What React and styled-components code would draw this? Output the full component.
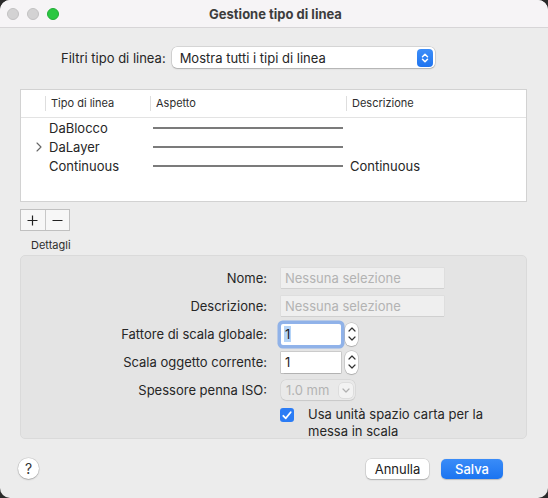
import styled, { createGlobalStyle } from 'styled-components';

const GlobalStyle = createGlobalStyle`
  html, body {
    margin: 0;
    padding: 0;
    background: #2a2a2a;
  }
  body {
    font-family: 'Inter', 'Liberation Sans', sans-serif;
    -webkit-font-smoothing: antialiased;
  }
`;

const Window = styled.div`
  width: 548px;
  height: 498px;
  background: #ececec;
  border-radius: 10px;
  overflow: hidden;
  display: flex;
  flex-direction: column;
  font-size: 13px;
  color: #262626;
`;

const TitleBar = styled.div`
  height: 28px;
  flex: none;
  box-sizing: border-box;
  background: #f6f4f6;
  border-bottom: 1px solid #d7d5d7;
  display: grid;
  grid-template-columns: 1fr auto 1fr;
  align-items: center;
  padding-left: 7px;
`;

const Lights = styled.div`
  display: flex;
  gap: 8px;
`;

const Light = styled.span`
  width: 12px;
  height: 12px;
  border-radius: 50%;
  box-sizing: border-box;
  background: ${p => (p.green ? '#2ac741' : '#d3d2d3')};
  border: 0.5px solid ${p => (p.green ? '#22ac36' : '#c2c1c2')};
`;

const Title = styled.div`
  font-weight: 700;
  color: #3d3d3d;
  font-size: 13px;
  margin-left: -4px;
`;

const Body = styled.div`
  padding: 0 21px 0 20px;
  display: flex;
  flex-direction: column;
`;

const FilterRow = styled.div`
  display: flex;
  align-items: center;
  gap: 6px;
  margin-top: 19px;
  padding-left: 41px;
`;

const Popup = styled.div`
  width: 263px;
  height: 21px;
  box-sizing: border-box;
  background: #fff;
  border-radius: 5px;
  box-shadow: 0 0 0 0.5px rgba(0, 0, 0, 0.18), 0 1px 1.5px rgba(0, 0, 0, 0.18);
  display: flex;
  align-items: center;
  justify-content: space-between;
  padding: 0 2px 0 8px;
`;

const BlueArrows = styled.span`
  width: 16px;
  height: 18px;
  border-radius: 4px;
  background: linear-gradient(#3d8ef8, #1f74ef);
  display: flex;
  align-items: center;
  justify-content: center;
`;

const Table = styled.div`
  margin-top: 21px;
  height: 113px;
  box-sizing: border-box;
  background: #fff;
  border: 1px solid #d2d2d2;
`;

const Columns = styled.div`
  display: grid;
  grid-template-columns: 24px 105px 196px 1fr;
  align-items: center;
`;

const Header = styled(Columns)`
  height: 27px;
  border-bottom: 1px solid #e3e3e3;
`;

const HeadCell = styled.div`
  height: 15px;
  line-height: 15px;
  font-size: 11px;
  color: #2e2e2e;
  padding-left: 5px;
  border-left: ${p => (p.sep ? '1px solid #dedede' : 'none')};
`;

const Row = styled(Columns)`
  height: 19px;
`;

const Cell = styled.div`
  padding-left: ${p => p.pad || 4}px;
  display: flex;
  align-items: center;
  white-space: nowrap;
`;

const Stroke = styled.div`
  height: 2px;
  background: #7b7b7b;
  margin: 0 3px;
`;

const SegButtons = styled.div`
  margin-top: 7px;
  display: flex;
  width: 50px;
  height: 22px;
  box-sizing: border-box;
  border: 1px solid #c0c0c0;
  background: #f7f7f7;
`;

const Seg = styled.div`
  flex: 1;
  display: flex;
  align-items: center;
  justify-content: center;
  border-left: ${p => (p.sep ? '1px solid #c8c8c8' : 'none')};
`;

const SectionLabel = styled.div`
  font-size: 11px;
  line-height: 14px;
  color: #2e2e2e;
  margin: 7px 0 3px 11px;
`;

const DetailBox = styled.div`
  height: 184px;
  box-sizing: border-box;
  background: #e4e4e4;
  border: 1px solid #dadada;
  border-radius: 5px;
  padding-top: 8px;
  display: grid;
  grid-template-columns: 246px 1fr;
  grid-auto-rows: 28px;
  column-gap: 14px;
  align-items: center;
`;

const Label = styled.div`
  text-align: right;
  color: #262626;
`;

const Field = styled.div`
  display: flex;
  align-items: center;
  gap: 4px;
`;

const TextBox = styled.div`
  width: ${p => p.w}px;
  height: ${p => p.h || 20}px;
  box-sizing: border-box;
  padding-left: 4px;
  display: flex;
  align-items: center;
  background: ${p => (p.disabled ? '#efefef' : '#fff')};
  color: ${p => (p.disabled ? '#b3b3b3' : '#1e1e1e')};
  box-shadow: ${p =>
    p.focus
      ? '0 0 0 0.5px #8fb4ee, 0 0 0 3.5px rgba(74, 137, 235, 0.55)'
      : p.disabled
        ? '0 0.5px 0 rgba(0,0,0,0.12), 0 0 0 0.5px rgba(0,0,0,0.05)'
        : '0 0 0 0.5px rgba(0,0,0,0.22), 0 0.5px 1px rgba(0,0,0,0.12)'};
  border-radius: ${p => (p.focus ? '2px' : '0')};
`;

const Selected = styled.span`
  background: #b4d3f7;
  padding: 0 1px;
  margin-left: -1px;
`;

const Stepper = styled.div`
  width: 13px;
  height: 23px;
  border-radius: 6px;
  background: #fff;
  box-shadow: 0 0 0 0.5px rgba(0, 0, 0, 0.2), 0 1px 1px rgba(0, 0, 0, 0.15);
  display: flex;
  flex-direction: column;
  align-items: center;
  justify-content: space-around;
  padding: 2px 0;
  box-sizing: border-box;
`;

const MiniPopup = styled.div`
  width: 74px;
  height: 20px;
  box-sizing: border-box;
  border-radius: 5px;
  background: #e9e9e9;
  box-shadow: 0 0 0 0.5px rgba(0, 0, 0, 0.08), 0 0.5px 1px rgba(0, 0, 0, 0.08);
  color: #b3b3b3;
  display: flex;
  align-items: center;
  justify-content: space-between;
  padding: 0 2px 0 5px;
`;

const MiniArrow = styled.span`
  width: 14px;
  height: 15px;
  border-radius: 4px;
  background: #f2f2f2;
  box-shadow: 0 0 0 0.5px rgba(0, 0, 0, 0.1);
  display: flex;
  align-items: center;
  justify-content: center;
`;

const CheckRow = styled.div`
  grid-column: 2;
  align-self: start;
  display: flex;
  align-items: flex-start;
  gap: 14px;
  margin-top: 2px;
  margin-left: -1px;
  line-height: 17px;
`;

const Check = styled.span`
  flex: none;
  width: 14px;
  height: 14px;
  margin-top: 2px;
  border-radius: 3px;
  background: #2b7cf5;
  display: flex;
  align-items: center;
  justify-content: center;
`;

const Footer = styled.div`
  flex: 1;
  display: flex;
  align-items: center;
  padding: 0 45px 0 18px;
`;

const Help = styled.div`
  width: 21px;
  height: 21px;
  border-radius: 50%;
  background: #fff;
  box-shadow: 0 0 0 0.5px rgba(0, 0, 0, 0.15), 0 1px 1.5px rgba(0, 0, 0, 0.2);
  display: flex;
  align-items: center;
  justify-content: center;
  font-size: 14px;
  color: #333;
`;

const Spacer = styled.div`
  flex: 1;
`;

const Button = styled.div`
  width: ${p => p.w}px;
  height: 20px;
  border-radius: 5px;
  display: flex;
  align-items: center;
  justify-content: center;
  margin-left: ${p => p.gap || 0}px;
  background: ${p => (p.primary ? 'linear-gradient(#3a8cf8, #1b74f0)' : '#fff')};
  color: ${p => (p.primary ? '#fff' : '#222')};
  font-weight: ${p => (p.primary ? 500 : 400)};
  box-shadow: ${p =>
    p.primary
      ? '0 0.5px 1px rgba(0,0,0,0.2)'
      : '0 0 0 0.5px rgba(0,0,0,0.15), 0 1px 1.5px rgba(0,0,0,0.2)'};
`;

const UpDown = ({ color = '#fff', size = 10 }) => (
  <svg width="8" height={size} viewBox="0 0 8 10" fill="none" stroke={color} strokeWidth="1.5" strokeLinecap="round" strokeLinejoin="round">
    <path d="M1.5 3.8 L4 1.3 L6.5 3.8" />
    <path d="M1.5 6.2 L4 8.7 L6.5 6.2" />
  </svg>
);

const Chevron = ({ up }) => (
  <svg width="8" height="5" viewBox="0 0 8 5" fill="none" stroke="#333" strokeWidth="1.2" strokeLinecap="round" strokeLinejoin="round">
    <path d={up ? 'M1 4 L4 1 L7 4' : 'M1 1 L4 4 L7 1'} />
  </svg>
);

const rows = [
  { name: 'DaBlocco' },
  { name: 'DaLayer', expandable: true },
  { name: 'Continuous', desc: 'Continuous' },
];

export default function App() {
  return (
    <>
      <GlobalStyle />
      <Window>
        <TitleBar>
          <Lights>
            <Light />
            <Light />
            <Light green />
          </Lights>
          <Title>Gestione tipo di linea</Title>
          <div />
        </TitleBar>

        <Body>
          <FilterRow>
            <span>Filtri tipo di linea:</span>
            <Popup>
              <span>Mostra tutti i tipi di linea</span>
              <BlueArrows>
                <UpDown />
              </BlueArrows>
            </Popup>
          </FilterRow>

          <Table>
            <Header>
              <HeadCell />
              <HeadCell sep>Tipo di linea</HeadCell>
              <HeadCell sep>Aspetto</HeadCell>
              <HeadCell sep>Descrizione</HeadCell>
            </Header>
            {rows.map(r => (
              <Row key={r.name}>
                <Cell pad={15}>
                  {r.expandable && (
                    <svg width="6" height="10" viewBox="0 0 6 10" fill="none" stroke="#666" strokeWidth="1.1" strokeLinecap="round" strokeLinejoin="round">
                      <path d="M1 1 L5 5 L1 9" />
                    </svg>
                  )}
                </Cell>
                <Cell>{r.name}</Cell>
                <Stroke />
                <Cell>{r.desc}</Cell>
              </Row>
            ))}
          </Table>

          <SegButtons>
            <Seg>
              <svg width="11" height="11" viewBox="0 0 11 11" stroke="#222" strokeWidth="1.2">
                <path d="M5.5 0.5 V10.5 M0.5 5.5 H10.5" />
              </svg>
            </Seg>
            <Seg sep>
              <svg width="11" height="11" viewBox="0 0 11 11" stroke="#222" strokeWidth="1.2">
                <path d="M0.5 5.5 H10.5" />
              </svg>
            </Seg>
          </SegButtons>

          <SectionLabel>Dettagli</SectionLabel>

          <DetailBox>
            <Label>Nome:</Label>
            <Field>
              <TextBox w={163} disabled>Nessuna selezione</TextBox>
            </Field>

            <Label>Descrizione:</Label>
            <Field>
              <TextBox w={163} disabled>Nessuna selezione</TextBox>
            </Field>

            <Label>Fattore di scala globale:</Label>
            <Field>
              <TextBox w={60} h={21} focus>
                <Selected>1</Selected>
              </TextBox>
              <Stepper>
                <Chevron up />
                <Chevron />
              </Stepper>
            </Field>

            <Label>Scala oggetto corrente:</Label>
            <Field>
              <TextBox w={60} h={21}>1</TextBox>
              <Stepper>
                <Chevron up />
                <Chevron />
              </Stepper>
            </Field>

            <Label>Spessore penna ISO:</Label>
            <Field>
              <MiniPopup>
                <span>1.0 mm</span>
                <MiniArrow>
                  <svg width="8" height="5" viewBox="0 0 8 5" fill="none" stroke="#b0b0b0" strokeWidth="1.2" strokeLinecap="round" strokeLinejoin="round">
                    <path d="M1 1 L4 4 L7 1" />
                  </svg>
                </MiniArrow>
              </MiniPopup>
            </Field>

            <CheckRow>
              <Check>
                <svg width="10" height="9" viewBox="0 0 10 9" fill="none" stroke="#fff" strokeWidth="1.8" strokeLinecap="round" strokeLinejoin="round">
                  <path d="M1.3 4.8 L3.8 7.3 L8.7 1.3" />
                </svg>
              </Check>
              <span>
                Usa unità spazio carta per la
                <br />
                messa in scala
              </span>
            </CheckRow>
          </DetailBox>
        </Body>

        <Footer>
          <Help>?</Help>
          <Spacer />
          <Button w={63}>Annulla</Button>
          <Button w={62} gap={12} primary>
            Salva
          </Button>
        </Footer>
      </Window>
    </>
  );
}
